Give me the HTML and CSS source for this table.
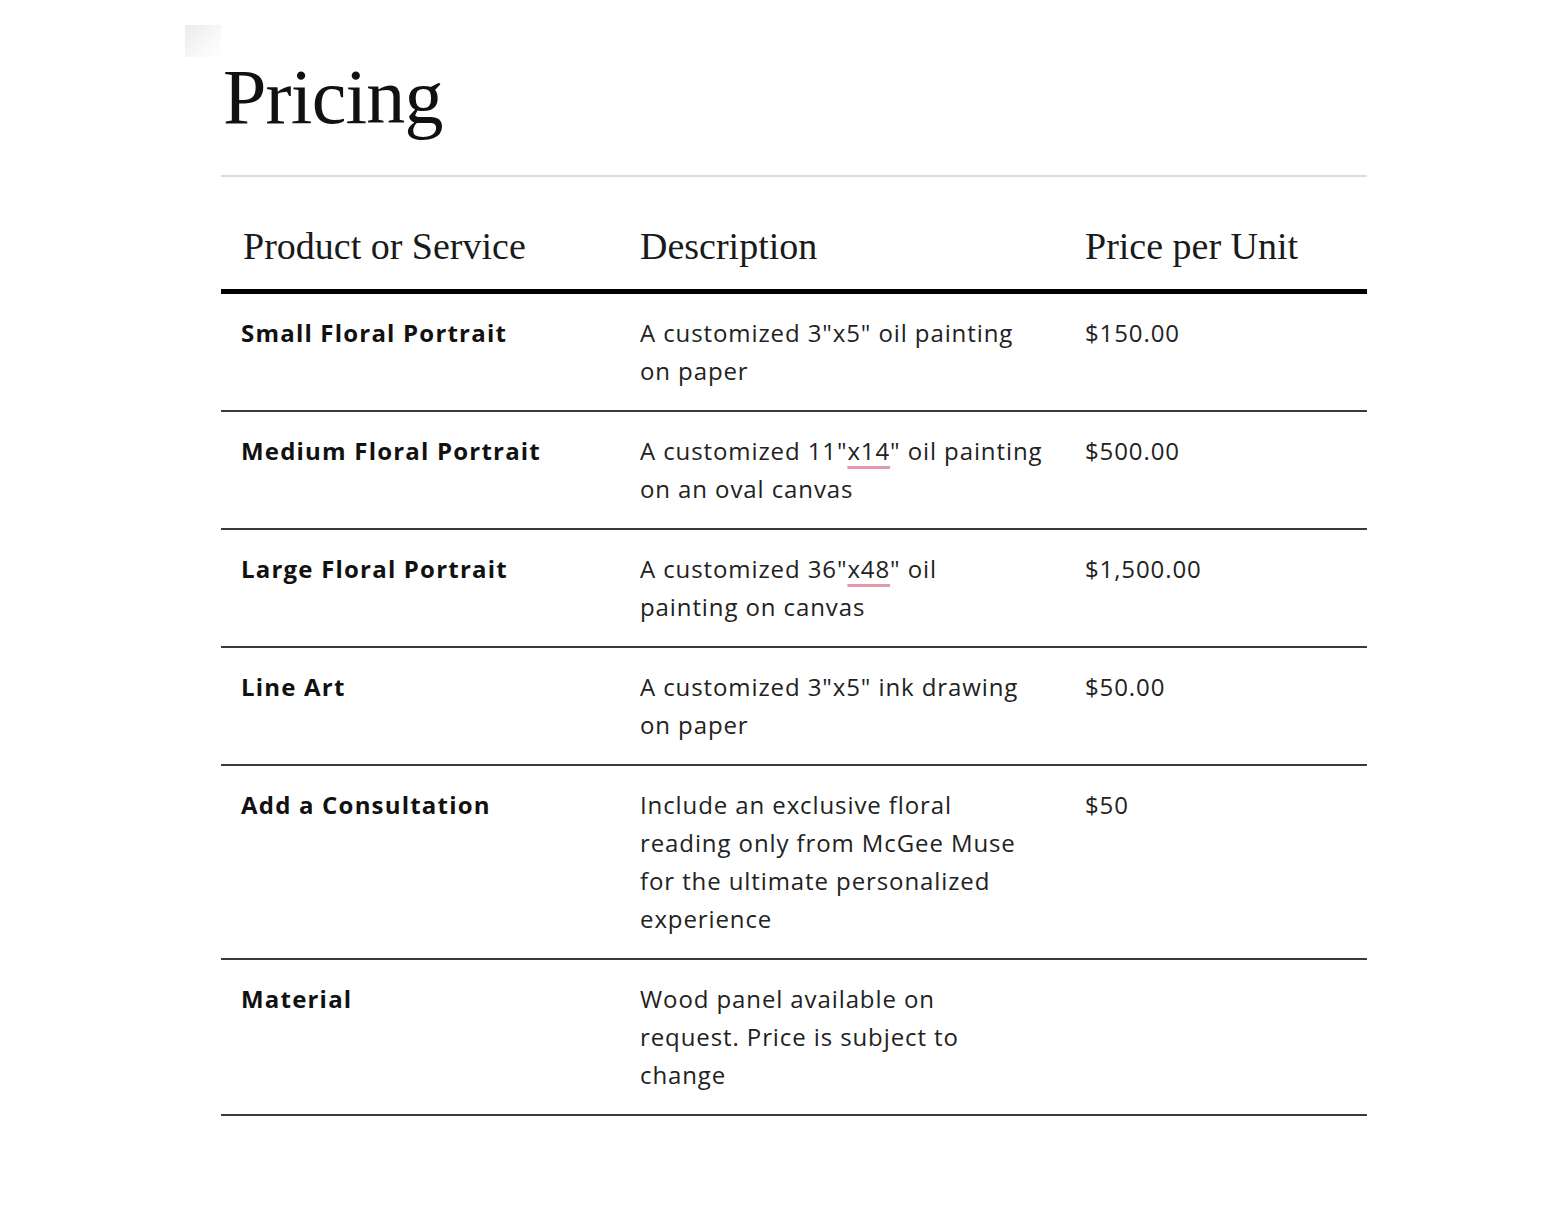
FILE: index.html
```html
<!DOCTYPE html>
<html lang="en">
<head>
<meta charset="utf-8">
<title>Pricing</title>
<link rel="stylesheet" href="styles.css">
</head>
<body>
<div class="smudge"></div>
<main class="page">
  <h1 class="title">Pricing</h1>
  <hr class="rule">
  <table class="pricing">
    <thead>
      <tr>
        <th class="c1">Product or Service</th>
        <th class="c2">Description</th>
        <th class="c3">Price per Unit</th>
      </tr>
    </thead>
    <tbody>
      <tr>
        <td class="name">Small Floral Portrait</td>
        <td class="desc">A customized 3"x5" oil painting on paper</td>
        <td class="price">$150.00</td>
      </tr>
      <tr>
        <td class="name">Medium Floral Portrait</td>
        <td class="desc">A customized 11"<span class="spell">x14</span>" oil painting on an oval canvas</td>
        <td class="price">$500.00</td>
      </tr>
      <tr>
        <td class="name">Large Floral Portrait</td>
        <td class="desc">A customized 36"<span class="spell">x48</span>" oil<br>painting on canvas</td>
        <td class="price">$1,500.00</td>
      </tr>
      <tr>
        <td class="name">Line Art</td>
        <td class="desc">A customized 3"x5" ink drawing on paper</td>
        <td class="price">$50.00</td>
      </tr>
      <tr>
        <td class="name">Add a Consultation</td>
        <td class="desc">Include an exclusive floral reading only from McGee Muse for the ultimate personalized experience</td>
        <td class="price">$50</td>
      </tr>
      <tr>
        <td class="name">Material</td>
        <td class="desc">Wood panel available on<br>request. Price is subject to<br>change</td>
        <td class="price"></td>
      </tr>
    </tbody>
  </table>
</main>
</body>
</html>
```

FILE: styles.css
```css
html, body {
  margin: 0;
  padding: 0;
  background: #ffffff;
}

body {
  position: relative;
  font-family: "Open Sans", "Liberation Sans", sans-serif;
  color: #1b1b1b;
}

.smudge {
  position: absolute;
  left: 185px;
  top: 25px;
  width: 36px;
  height: 32px;
  background: linear-gradient(135deg, #ececec 0%, #f6f6f6 50%, #ffffff 100%);
}

.page {
  width: 1146px;
  padding: 58px 0 100px 221px;
}

.title {
  margin: 0 0 0 2px;
  font-family: "Liberation Serif", "Times New Roman", serif;
  font-weight: normal;
  font-size: 78px;
  line-height: 1;
  letter-spacing: -0.8px;
  color: #111;
}

.rule {
  margin: 39px 0 0 0;
  border: 0;
  height: 2px;
  background: #dcdcdc;
}

.pricing {
  width: 100%;
  border-collapse: collapse;
  table-layout: fixed;
}

.pricing th {
  font-family: "Liberation Serif", "Times New Roman", serif;
  font-weight: normal;
  font-size: 38px;
  line-height: 48px;
  text-align: left;
  color: #1a1a1a;
  padding: 45px 20px 19px 20px;
  border-bottom: 5px solid #000;
}

.pricing th.c1 { width: 357px; padding-left: 22px; }
.pricing th.c2 { width: 405px; }
.pricing th.c3 { padding-left: 20px; }

.pricing td {
  vertical-align: top;
  font-size: 24px;
  line-height: 38px;
  letter-spacing: 0.9px;
  padding: 20px 20px 20px 20px;
  border-bottom: 2px solid #3a3a3a;
  color: #222;
}

.pricing td.name {
  font-weight: 700;
  letter-spacing: 1.2px;
  color: #111;
}

.pricing td.price {
  padding-left: 20px;
}

.spell {
  text-decoration: underline;
  text-decoration-color: #e39aab;
  text-decoration-thickness: 3px;
  text-underline-offset: 6px;
}
```
